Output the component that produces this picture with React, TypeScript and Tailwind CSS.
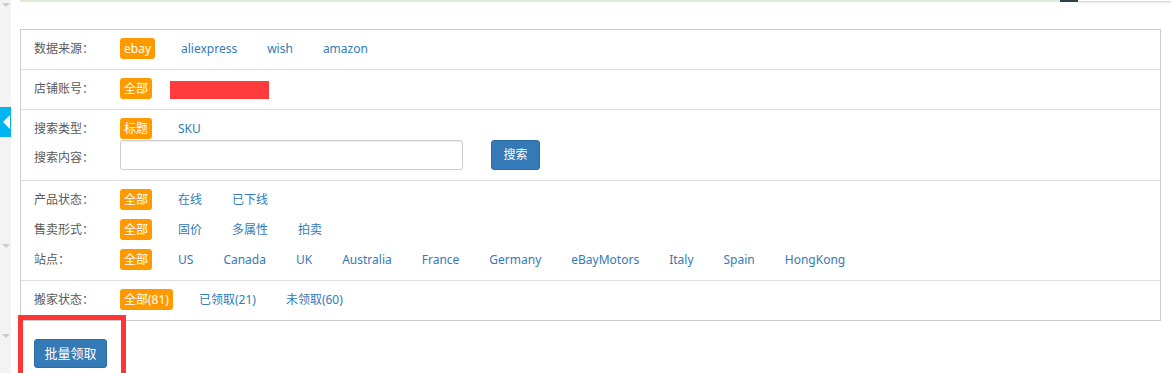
import React from "react";

type Opt = { label: string; active?: boolean };

const font = "font-['Noto_Sans','Noto_Sans_CJK_SC',sans-serif]";

const Tag = ({ label, active }: Opt) =>
  active ? (
    <span className="inline-flex h-[21px] items-center rounded-[3px] bg-[#ff9900] px-1 text-[12px] text-white">
      {label}
    </span>
  ) : (
    <span className="inline-flex h-[21px] items-center px-1 text-[12px] text-[#337ab7]">{label}</span>
  );

const Line = ({ label, options }: { label: string; options: Opt[] }) => (
  <div className="flex h-[21px] items-center">
    <div className="w-[86px] text-[12px] text-[#5a5a5a]">{label}</div>
    <div className="flex items-center gap-[22px]">
      {options.map((o) => (
        <Tag key={o.label} {...o} />
      ))}
    </div>
  </div>
);

const Row = ({ children, last }: { children: React.ReactNode; last?: boolean }) => (
  <div className={`flex flex-col gap-[9px] pb-[10px] pl-[13px] pt-2 ${last ? "" : "border-b border-[#dddddd]"}`}>
    {children}
  </div>
);

const sites = ["US", "Canada", "UK", "Australia", "France", "Germany", "eBayMotors", "Italy", "Spain", "HongKong"];

export default function App() {
  return (
    <div className={`flex h-[373px] w-[1171px] overflow-hidden bg-white ${font}`}>
      {/* left strip */}
      <div className="flex w-[11px] shrink-0 flex-col items-center bg-[#f3f3f3]">
        <span className="mt-[3px] h-0 w-0 border-x-[4px] border-t-[4px] border-x-transparent border-t-[#cccccc]" />
        <div className="mt-[100px] flex h-[30px] w-[11px] items-center justify-end bg-[#00b4ef] pr-[1px]">
          <span className="h-0 w-0 border-y-[7px] border-r-[7px] border-y-transparent border-r-white" />
        </div>
        <span className="mt-[107px] h-0 w-0 border-x-[4px] border-t-[4px] border-x-transparent border-t-[#cccccc]" />
        <span className="mt-[86px] h-0 w-0 border-x-[4px] border-t-[4px] border-x-transparent border-t-[#cccccc]" />
      </div>

      <div className="relative flex flex-1 flex-col pl-[9px]">
        {/* top edge */}
        <div className="flex h-[3px] items-start">
          <div className="h-[2px] w-[1040px] bg-[#dcefd2]" />
          <div className="h-[2px] w-[18px] bg-[#2f4050]" />
          <div className="mt-[1px] h-[1px] flex-1 bg-[#dddddd] shadow-[0_1px_2px_rgba(0,0,0,0.15)]" />
        </div>

        {/* filter box */}
        <div className="mt-[26px] w-[1141px] border border-[#cccccc]">
          <Row>
            <Line
              label="数据来源："
              options={[{ label: "ebay", active: true }, { label: "aliexpress" }, { label: "wish" }, { label: "amazon" }]}
            />
          </Row>
          <Row>
            <div className="flex h-[21px] items-center">
              <div className="w-[86px] text-[12px] text-[#5a5a5a]">店铺账号：</div>
              <Tag label="全部" active />
              <div className="ml-[18px] mt-[2px] h-[18px] w-[99px] bg-[#ff3b3b]" />
            </div>
          </Row>
          <div className="flex flex-col border-b border-[#dddddd] pb-[10px] pl-[13px] pt-2">
            <Line label="搜索类型：" options={[{ label: "标题", active: true }, { label: "SKU" }]} />
            <div className="mt-[1px] flex h-[30px] items-center">
              <div className="mt-[6px] w-[86px] text-[12px] text-[#5a5a5a]">搜索内容：</div>
              <input className="h-[30px] w-[343px] rounded-[3px] border border-[#cccccc] px-2 text-[12px] shadow-[inset_0_1px_1px_rgba(0,0,0,0.075)] outline-none" />
              <button className="ml-[28px] h-[30px] w-[49px] rounded-[3px] border border-[#2e6da4] bg-[#337ab7] text-[12px] text-white">
                搜索
              </button>
            </div>
          </div>
          <Row>
            <Line label="产品状态：" options={[{ label: "全部", active: true }, { label: "在线" }, { label: "已下线" }]} />
            <Line
              label="售卖形式："
              options={[{ label: "全部", active: true }, { label: "固价" }, { label: "多属性" }, { label: "拍卖" }]}
            />
            <Line label="站点：" options={[{ label: "全部", active: true }, ...sites.map((s) => ({ label: s }))]} />
          </Row>
          <Row last>
            <Line
              label="搬家状态："
              options={[{ label: "全部(81)", active: true }, { label: "已领取(21)" }, { label: "未领取(60)" }]}
            />
          </Row>
        </div>

        <div className="pl-[14px] pt-[18px]">
          <button className="h-[29px] w-[73px] rounded-[3px] border border-[#2e6da4] bg-[#337ab7] text-[13px] text-white">
            批量领取
          </button>
        </div>

        {/* annotation frame */}
        <div className="absolute left-[7px] top-[315px] h-[70px] w-[108px] border-[5px] border-[#ff3535]" />
      </div>
    </div>
  );
}
